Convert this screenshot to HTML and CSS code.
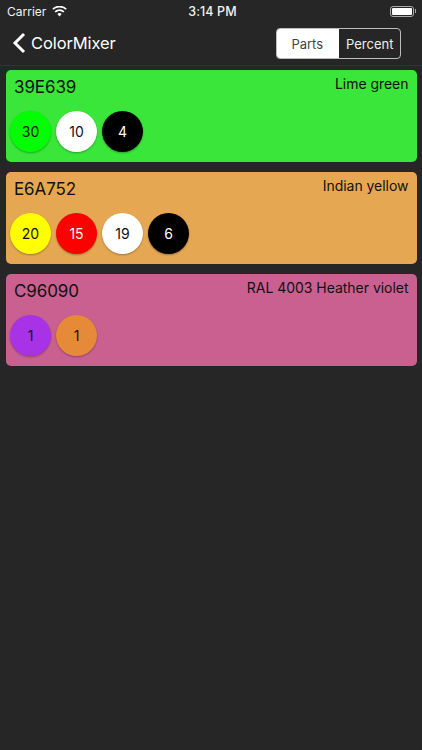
FILE: index.html
```html
<!DOCTYPE html>
<html lang="en">
<head>
<meta charset="utf-8">
<title>ColorMixer</title>
<link rel="stylesheet" href="styles.css">
</head>
<body>
<div class="status">
  <div class="status-left">
    <span>Carrier</span>
    <svg class="wifi" viewBox="0 0 16 12" width="15" height="11"><path d="M8 11.5 5.6 8.8a3.4 3.4 0 0 1 4.8 0L8 11.5ZM3.9 7 2.6 5.6a7.8 7.8 0 0 1 10.8 0L12.1 7a5.9 5.9 0 0 0-8.2 0ZM1.3 4.2 0 2.9a11.6 11.6 0 0 1 16 0l-1.3 1.3a9.8 9.8 0 0 0-13.4 0Z" fill="#fff"/></svg>
  </div>
  <span class="time">3:14 PM</span>
  <div class="battery"><span class="battery-body"><span class="battery-fill"></span></span><span class="battery-tip"></span></div>
</div>
<header class="nav">
  <div class="back">
    <svg viewBox="0 0 14 22" width="14" height="22"><path d="M12 2 3 11l9 9" fill="none" stroke="#fff" stroke-width="3"/></svg>
    <span>ColorMixer</span>
  </div>
  <div class="segment">
    <span class="seg seg-on">Parts</span>
    <span class="seg">Percent</span>
  </div>
</header>
<main class="list">
  <section class="card lime">
    <div class="card-head"><span class="code">39E639</span><span class="name">Lime green</span></div>
    <div class="dots">
      <span class="dot c-green">30</span>
      <span class="dot c-white">10</span>
      <span class="dot c-black">4</span>
    </div>
  </section>
  <section class="card yellow">
    <div class="card-head"><span class="code">E6A752</span><span class="name">Indian yellow</span></div>
    <div class="dots">
      <span class="dot c-yellow">20</span>
      <span class="dot c-red">15</span>
      <span class="dot c-white">19</span>
      <span class="dot c-black">6</span>
    </div>
  </section>
  <section class="card violet">
    <div class="card-head"><span class="code">C96090</span><span class="name">RAL 4003 Heather violet</span></div>
    <div class="dots">
      <span class="dot c-purple">1</span>
      <span class="dot c-orange">1</span>
    </div>
  </section>
</main>
</body>
</html>
```
FILE: styles.css
```css
* { box-sizing: border-box; }
html, body { margin: 0; height: 100%; }
body {
  width: 422px;
  height: 750px;
  overflow: hidden;
  background: #262626;
  color: #fff;
  font-family: Inter, "Liberation Sans", sans-serif;
}
.status {
  height: 21px;
  display: grid;
  grid-template-columns: 1fr auto 1fr;
  align-items: center;
  padding: 1px 6px 0 7px;
  font-size: 12px;
  color: #f2f2f2;
}
.status-left { display: flex; align-items: center; gap: 6px; }
.time { font-size: 12.5px; font-weight: 500; letter-spacing: .1px; padding-left: 2px; }
.battery { justify-self: end; display: flex; align-items: center; }
.battery-body {
  width: 24px;
  height: 11px;
  border: 1px solid #aaa;
  border-radius: 3px;
  padding: 1px;
  display: flex;
}
.battery-fill { flex: 1; background: #fff; border-radius: 1px; }
.battery-tip { width: 1px; height: 4px; background: #aaa; margin-left: 1px; }
.nav {
  height: 45px;
  display: flex;
  align-items: center;
  justify-content: space-between;
  padding: 0 21px 0 12px;
  border-bottom: 1px solid #333;
}
.back { display: flex; align-items: center; gap: 5px; font-size: 16.5px; letter-spacing: -.1px; }
.segment {
  display: flex;
  width: 125px;
  height: 30.5px;
  border: 1px solid #bdbdbd;
  border-radius: 4px;
  overflow: hidden;
  font-size: 13px;
  margin-top: 1px;
}
.seg { display: flex; align-items: center; justify-content: center; width: 62px; flex: auto; color: #eee; padding-left: 1px; }
.seg-on { background: #fff; color: #444; padding: 0 1px 0 0; }
.list {
  display: flex;
  flex-direction: column;
  gap: 10px;
  padding: 4px 5.5px 0;
}
.card {
  height: 92px;
  border-radius: 5px;
  padding: 6px 8px 10px 4.5px;
  color: #111;
  display: flex;
  flex-direction: column;
  justify-content: space-between;
}
.lime { background: #39e639; }
.yellow { background: #e6a752; }
.violet { background: #c96090; }
.card-head { display: flex; justify-content: space-between; padding-left: 4px; }
.code { font-size: 17px; line-height: 22px; letter-spacing: -.1px; }
.name { font-size: 14px; line-height: 16px; letter-spacing: -.03px; }
.dots { display: flex; gap: 5px; }
.dot {
  width: 41px;
  height: 41px;
  border-radius: 50%;
  display: flex;
  align-items: center;
  justify-content: center;
  font-size: 14px;
  box-shadow: 0 1px 2px rgba(0, 0, 0, .3);
}
.c-green { background: #00ff00; }
.c-white { background: #fff; }
.c-black { background: #000; color: #fff; }
.c-yellow { background: #ffff00; }
.c-red { background: #ff0000; color: #fff; }
.c-purple { background: #a833e6; }
.c-orange { background: #e68a39; }
```
